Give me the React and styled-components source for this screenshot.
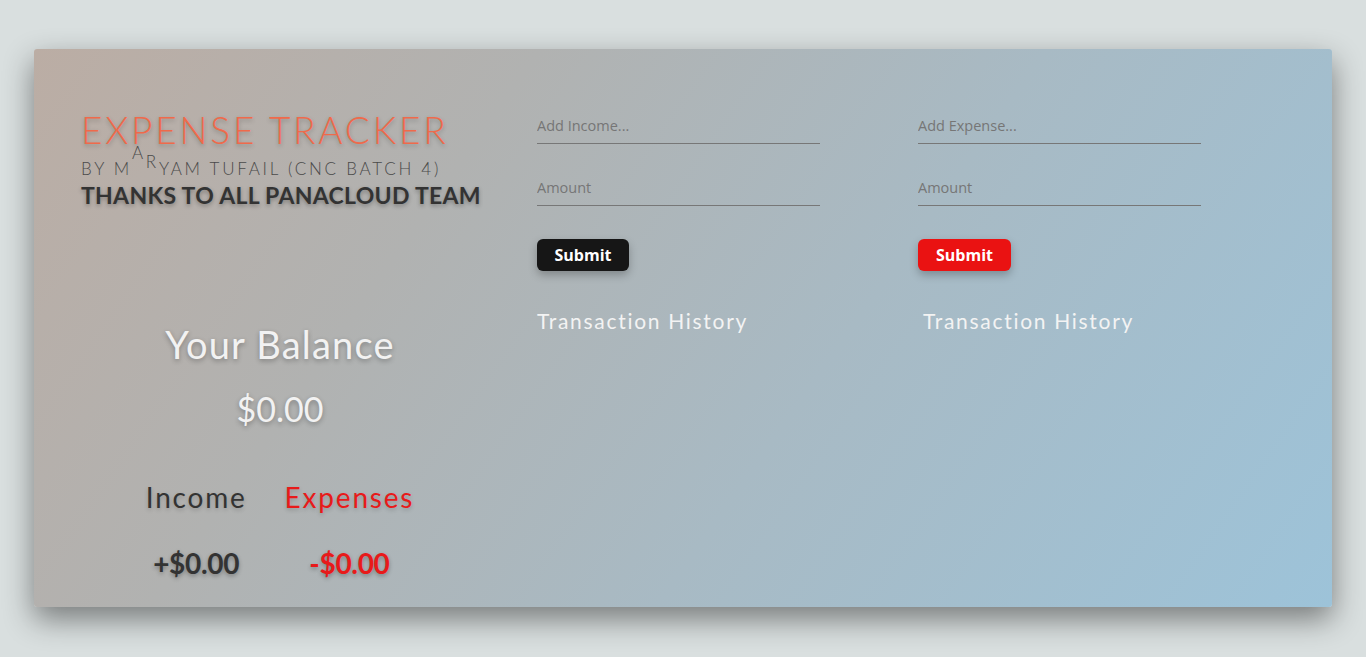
import React from "react";
import styled, { createGlobalStyle } from "styled-components";

const GlobalStyle = createGlobalStyle`
  html, body {
    margin: 0;
    padding: 0;
    background: #d9dfdf;
    font-family: "Lato", "Open Sans", sans-serif;
  }
`;

const Page = styled.div`
  padding: 49px 34px 50px 34px;
  min-height: 657px;
  box-sizing: border-box;
`;

const Card = styled.div`
  display: flex;
  height: 558px;
  box-sizing: border-box;
  padding: 58px 20px 0 47px;
  border-radius: 3px;
  background: linear-gradient(125deg, #bbada4 0%, #b1b2b1 30%, #a8bac4 60%, #9dc3d9 100%);
  box-shadow: 0 12px 30px rgba(0, 0, 0, 0.45);
`;

const LeftColumn = styled.div`
  flex: 0 0 410px;
  margin-right: 46px;
  display: flex;
  flex-direction: column;
`;

const Title = styled.h1`
  margin: 0;
  font-family: "Lato", sans-serif;
  font-weight: 300;
  font-size: 37px;
  letter-spacing: 2.8px;
  line-height: 46px;
  color: #ef6a4b;
  text-shadow: 0 2px 4px rgba(0, 0, 0, 0.25);
`;

const Byline = styled.p`
  margin: 5px 0 0 0;
  font-weight: 300;
  font-size: 17px;
  letter-spacing: 2.75px;
  line-height: 22px;
  color: #4a4a4a;
`;

const Raised = styled.span`
  display: inline-block;
  transform: translateY(${(p) => p.$up}px);
`;

const Thanks = styled.p`
  margin: 1px 0 0 0;
  font-weight: 700;
  font-size: 23px;
  letter-spacing: 0.3px;
  line-height: 28px;
  color: #333;
  text-shadow: 0 2px 4px rgba(0, 0, 0, 0.3);
`;

const Balance = styled.div`
  margin-top: 112px;
  padding-right: 12px;
  display: flex;
  flex-direction: column;
  align-items: center;
`;

const BalanceLabel = styled.h2`
  margin: 0;
  font-weight: 400;
  font-size: 38px;
  letter-spacing: 1.2px;
  line-height: 46px;
  color: #f2f2f2;
  text-shadow: 0 2px 5px rgba(0, 0, 0, 0.3);
`;

const BalanceValue = styled.div`
  margin-top: 22px;
  font-size: 34px;
  line-height: 40px;
  color: #f2f2f2;
  text-shadow: 0 2px 5px rgba(0, 0, 0, 0.3);
`;

const Totals = styled.div`
  margin-top: 50px;
  display: grid;
  grid-template-columns: auto auto;
  column-gap: 38px;
  row-gap: 30px;
  justify-items: center;
`;

const TotalLabel = styled.div`
  font-size: 28px;
  line-height: 36px;
  letter-spacing: 1.8px;
  color: ${(p) => (p.$red ? "#e81a1a" : "#333")};
  text-shadow: 0 2px 4px rgba(0, 0, 0, 0.2);
`;

const TotalValue = styled.div`
  font-size: 28px;
  font-weight: 700;
  line-height: 36px;
  letter-spacing: -0.3px;
  color: ${(p) => (p.$red ? "#e81a1a" : "#333")};
  text-shadow: 0 2px 4px rgba(0, 0, 0, 0.3);
`;

const FormColumn = styled.div`
  flex: 0 0 381px;
  display: flex;
  flex-direction: column;
  padding-top: 1px;
`;

const Input = styled.input`
  width: 283px;
  height: 36px;
  box-sizing: border-box;
  margin-bottom: 26px;
  padding: 0;
  border: none;
  border-bottom: 1px solid #777;
  background: transparent;
  outline: none;
  font-family: "Open Sans", sans-serif;
  font-size: 14.5px;
  color: #444;

  &::placeholder {
    color: #767676;
  }
`;

const SubmitButton = styled.button`
  align-self: flex-start;
  width: ${(p) => (p.$red ? "93px" : "92px")};
  height: 32px;
  margin-top: 7px;
  border: none;
  border-radius: 6px;
  background: ${(p) => (p.$red ? "#ea1212" : "#161616")};
  color: #fff;
  font-family: "Open Sans", sans-serif;
  font-weight: 700;
  font-size: 16px;
  box-shadow: 0 4px 8px rgba(0, 0, 0, 0.25);
  cursor: pointer;
`;

const HistoryTitle = styled.h3`
  margin: 36px 0 0 ${(p) => p.$indent || 0}px;
  font-weight: 400;
  font-size: 21px;
  letter-spacing: 1.7px;
  line-height: 28px;
  color: #f3f3f3;
`;

function EntryForm({ label, red, indent }) {
  return (
    <FormColumn>
      <Input placeholder={label} />
      <Input placeholder="Amount" />
      <SubmitButton $red={red}>Submit</SubmitButton>
      <HistoryTitle $indent={indent}>Transaction History</HistoryTitle>
    </FormColumn>
  );
}

export default function App() {
  return (
    <>
      <GlobalStyle />
      <Page>
        <Card>
          <LeftColumn>
            <Title>EXPENSE TRACKER</Title>
            <Byline>
              BY M<Raised $up={-16}>A</Raised>
              <Raised $up={-7}>R</Raised>YAM TUFAIL (CNC BATCH 4)
            </Byline>
            <Thanks>THANKS TO ALL PANACLOUD TEAM</Thanks>
            <Balance>
              <BalanceLabel>Your Balance</BalanceLabel>
              <BalanceValue>$0.00</BalanceValue>
              <Totals>
                <TotalLabel>Income</TotalLabel>
                <TotalLabel $red>Expenses</TotalLabel>
                <TotalValue>+$0.00</TotalValue>
                <TotalValue $red>-$0.00</TotalValue>
              </Totals>
            </Balance>
          </LeftColumn>
          <EntryForm label="Add Income..." />
          <EntryForm label="Add Expense..." red indent={5} />
        </Card>
      </Page>
    </>
  );
}
